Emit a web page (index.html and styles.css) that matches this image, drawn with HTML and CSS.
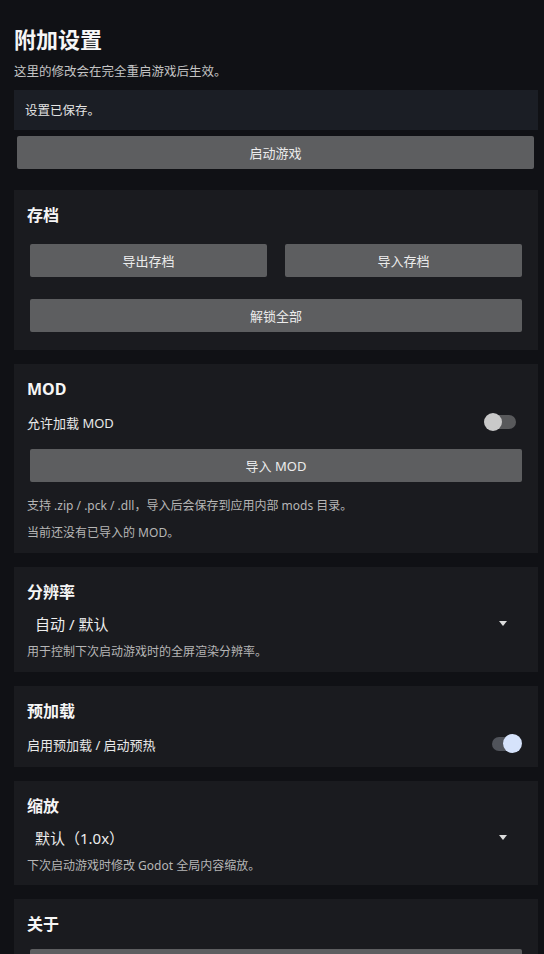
FILE: index.html
```html
<!DOCTYPE html>
<html>
<head>
  <meta name='viewport' content='width=device-width, initial-scale=1'>
  <meta charset='UTF-8'>
  <title>附加设置</title>
  <link rel="stylesheet" href="styles.css">
</head>
<body>
  <div class='pg'>
    <h1>附加设置</h1>
    <div class='sub'>这里的修改会在完全重启游戏后生效。</div>

    <div class='st'>设置已保存。</div>
    <button class='b top'>启动游戏</button>

    <div class='card'>
      <h2>存档</h2>
      <div class='two'>
        <button class='b'>导出存档</button>
        <button class='b'>导入存档</button>
      </div>
      <button class='b in unlock'>解锁全部</button>
    </div>

    <div class='card mod'>
      <h2>MOD</h2>
      <div class='row'>
        <span class='lb'>允许加载 MOD</span>
        <span class='tg'><span class='tr'></span><span class='kn'></span></span>
      </div>
      <button class='b in imp'>导入 MOD</button>
      <p class='d d1'>支持 .zip / .pck / .dll，导入后会保存到应用内部 mods 目录。</p>
      <p class='d d2'>当前还没有已导入的 MOD。</p>
    </div>

    <div class='card sel'>
      <h2>分辨率</h2>
      <div class='dd'><span>自动 / 默认</span><i class='ar'></i></div>
      <p class='d'>用于控制下次启动游戏时的全屏渲染分辨率。</p>
    </div>

    <div class='card pre'>
      <h2>预加载</h2>
      <div class='row'>
        <span class='lb'>启用预加载 / 启动预热</span>
        <span class='tg on'><span class='tr'></span><span class='kn'></span></span>
      </div>
    </div>

    <div class='card sel sc'>
      <h2>缩放</h2>
      <div class='dd'><span>默认（1.0x）</span><i class='ar'></i></div>
      <p class='d'>下次启动游戏时修改 Godot 全局内容缩放。</p>
    </div>

    <div class='card'>
      <h2>关于</h2>
      <button class='b in about'></button>
    </div>
  </div>
</body>
</html>
```

FILE: styles.css
```css
html,body{margin:0;padding:0;background:#101115;}
body{font-family:"Noto Sans","Noto Sans CJK SC",sans-serif;color:#e4e4e4;height:954px;overflow:hidden;}
.pg{padding:24px 6px 0 14px;}
h1{margin:0;font-size:22px;line-height:30px;font-weight:bold;color:#f6f6f6;}
.sub{margin-top:9px;font-size:12.5px;line-height:18px;color:#c4c4c4;}
.st{margin-top:9px;height:40px;line-height:42px;padding:0 11px;font-size:12.5px;background:#1b1e25;color:#e4e4e4;}
.b{display:block;width:100%;height:33px;border:none;border-radius:2px;background:#5d5e60;color:#ececec;font-family:inherit;font-size:13px;padding:0;}
.top{margin:6px 4px 0 3px;width:calc(100% - 7px);}
.card{margin-top:14px;background:#1a1b1f;padding:14px 13px 18px;}
.top+.card{margin-top:21px;}
h2{margin:0;font-size:16px;line-height:22px;font-weight:bold;color:#f6f6f6;}
.two{display:flex;gap:18px;margin:18px 3px 0;}
.in{margin:0 3px;width:calc(100% - 6px);}
.unlock{margin-top:22px;}
.row{display:flex;justify-content:space-between;align-items:center;height:24px;margin-top:10px;}
.lb{font-size:13px;color:#e8e8e8;}
.tg{position:relative;width:38px;height:20px;margin-right:3px;}
.tr{position:absolute;left:6px;top:3px;width:26px;height:14px;border-radius:7px;background:#58595b;}
.kn{position:absolute;left:0;top:1px;width:18px;height:18px;border-radius:50%;background:#c9c9c9;}
.on .tr{left:8px;width:24px;background:#50535a;}
.on .kn{left:auto;right:0;top:0;width:19px;height:19px;background:#d6e3fb;}
.imp{margin-top:15px;}
.d{margin:0;font-size:12px;line-height:18px;color:#b6b6b6;}
.d1{margin-top:15px;}
.d2{margin-top:9px;}
.mod{padding-bottom:11px;}
.dd{display:flex;justify-content:space-between;align-items:center;height:32px;margin-top:4px;padding:0 18px 0 8px;font-size:15px;color:#ededed;}
.ar{display:block;width:0;height:0;border-left:4px solid transparent;border-right:4px solid transparent;border-top:5px solid #dcdcdc;}
.sel{padding-bottom:11px;}
.sel .d{margin-top:4px;}
.sc{padding-bottom:10px;}
.pre{padding-bottom:11px;}
.about{margin-top:14px;}
```
